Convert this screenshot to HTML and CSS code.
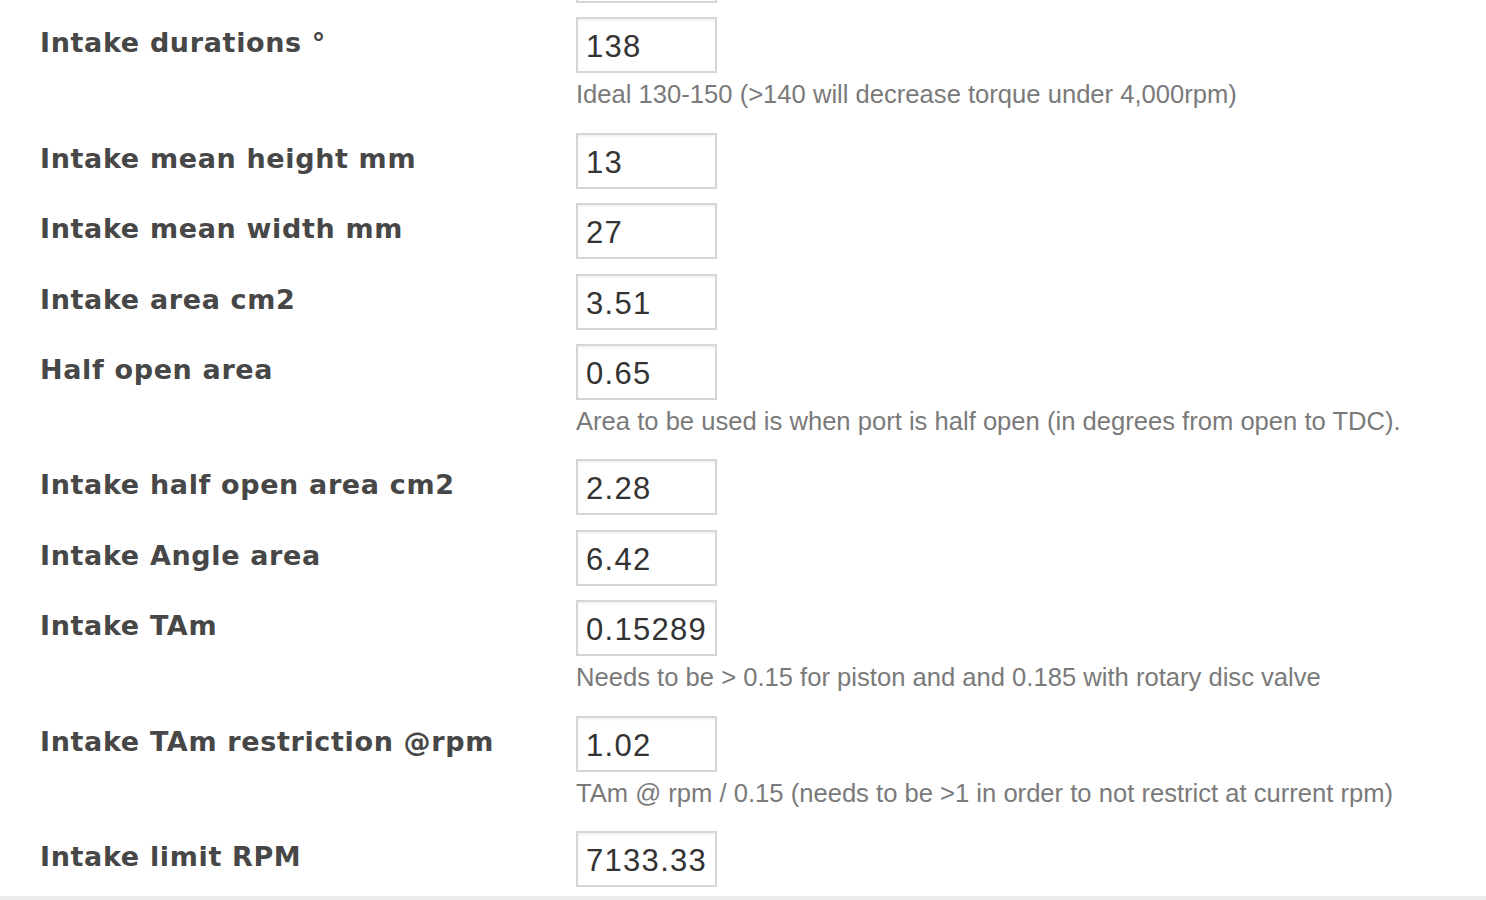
FILE: index.html
```html
<!DOCTYPE html>
<html>
<head>
<meta charset="utf-8">
<link rel="stylesheet" href="styles.css">
</head>
<body>
<div class="page">
  <div class="form">
    <div class="row partial">
      <div class="label"></div>
      <div class="field"><div class="input">&nbsp;</div></div>
    </div>
    <div class="row">
      <div class="label">Intake durations °</div>
      <div class="field"><div class="input">138</div><div class="help">Ideal 130-150 (&gt;140 will decrease torque under 4,000rpm)</div></div>
    </div>
    <div class="row">
      <div class="label">Intake mean height mm</div>
      <div class="field"><div class="input">13</div></div>
    </div>
    <div class="row">
      <div class="label">Intake mean width mm</div>
      <div class="field"><div class="input">27</div></div>
    </div>
    <div class="row">
      <div class="label">Intake area cm2</div>
      <div class="field"><div class="input">3.51</div></div>
    </div>
    <div class="row">
      <div class="label">Half open area</div>
      <div class="field"><div class="input">0.65</div><div class="help">Area to be used is when port is half open (in degrees from open to TDC).</div></div>
    </div>
    <div class="row">
      <div class="label">Intake half open area cm2</div>
      <div class="field"><div class="input">2.28</div></div>
    </div>
    <div class="row">
      <div class="label">Intake Angle area</div>
      <div class="field"><div class="input">6.42</div></div>
    </div>
    <div class="row">
      <div class="label">Intake TAm</div>
      <div class="field"><div class="input">0.15289</div><div class="help">Needs to be &gt; 0.15 for piston and and 0.185 with rotary disc valve</div></div>
    </div>
    <div class="row">
      <div class="label">Intake TAm restriction @rpm</div>
      <div class="field"><div class="input">1.02</div><div class="help">TAm @ rpm / 0.15 (needs to be &gt;1 in order to not restrict at current rpm)</div></div>
    </div>
    <div class="row">
      <div class="label">Intake limit RPM</div>
      <div class="field"><div class="input">7133.33</div></div>
    </div>
  </div>
  <div class="footer-line"></div>
</div>
</body>
</html>
```
FILE: styles.css
```css
html, body {
  margin: 0;
  padding: 0;
  background: #ffffff;
}
.page {
  width: 1486px;
  height: 900px;
  overflow: hidden;
  display: flex;
  flex-direction: column;
}
.form {
  margin-top: -53px;
  padding-left: 40px;
  display: flex;
  flex-direction: column;
  gap: 14.4px;
  flex: 1;
}
.row {
  display: flex;
  align-items: flex-start;
}
.label {
  width: 536px;
  flex: none;
  padding-top: 10px;
  font-family: "DejaVu Sans", Verdana, sans-serif;
  font-weight: bold;
  font-size: 27px;
  letter-spacing: 0.65px;
  color: #474747;
  line-height: 32px;
}
.field {
  display: flex;
  flex-direction: column;
}
.input {
  box-sizing: border-box;
  width: 141px;
  height: 56px;
  border: 2px solid #d6d6d6;
  box-shadow: inset 0 2px 2px rgba(0,0,0,0.05);
  padding: 10px 0 0 8px;
  font-family: "Liberation Sans", Arial, sans-serif;
  font-size: 31px;
  letter-spacing: 1.3px;
  line-height: 36px;
  color: #333333;
  overflow: hidden;
  white-space: nowrap;
}
.help {
  margin-top: 6px;
  margin-bottom: 9px;
  font-family: "Liberation Sans", Arial, sans-serif;
  font-size: 25.6px;
  line-height: 30px;
  color: #7a7a7a;
  white-space: nowrap;
}
.footer-line {
  height: 4px;
  background: #ebebeb;
  flex: none;
}
```
